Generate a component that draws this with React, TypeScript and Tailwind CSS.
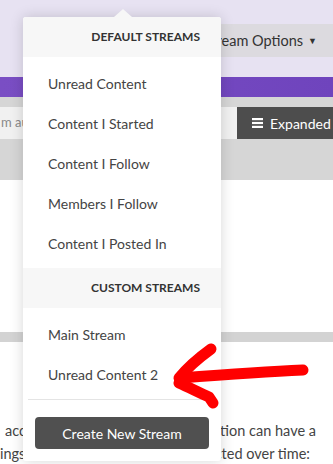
const defaultStreams = ["Unread Content", "Content I Started", "Content I Follow", "Members I Follow", "Content I Posted In"]
const customStreams = ["Main Stream", "Unread Content 2"]

export default function App() {
  return (
    <div
      className="relative w-[333px] h-[464px] overflow-hidden bg-white text-[#444]"
      style={{ fontFamily: 'Lato, "Noto Sans", sans-serif' }}
    >
      {/* page behind the menu */}
      <div className="h-[77px] bg-[#e7e2f2] flex items-start justify-end pt-[24px]">
        <div className="h-[33px] w-[140px] bg-[#dcdadf] rounded-l-[3px] flex items-center justify-end pr-[16px] gap-[5px] text-[14.5px] text-[#333] whitespace-nowrap">
          <span>Stream Options</span>
          <span className="text-[9px]">▼</span>
        </div>
      </div>
      <div className="h-[20px] bg-gradient-to-r from-[#7a4ec4] to-[#6f44bd]" />
      <div className="h-[10px] bg-[#d6d6d6]" />
      <div className="h-[32px] flex">
        <div className="flex-1 bg-[#f1f1f1] flex items-center text-[13px] text-[#888] pl-[1px]">m au</div>
        <div className="w-[96px] bg-[#4d4d4d] text-white flex items-center gap-[7px] pl-[15px] text-[14px] whitespace-nowrap">
          <svg width="11" height="10" viewBox="0 0 11 10" fill="#fff">
            <rect x="0" y="0" width="11" height="2.2" />
            <rect x="0" y="3.9" width="11" height="2.2" />
            <rect x="0" y="7.8" width="11" height="2.2" />
          </svg>
          <span>Expanded</span>
        </div>
      </div>
      <div className="h-[41px] bg-[#d6d6d6]" />
      <div className="h-[152px] bg-white" />
      <div className="h-[10px] bg-[#d3d3d3]" />
      <div className="pt-[77px] text-[14.5px] leading-[23px] text-[#444]">
        <div className="flex justify-between pr-[17px]">
          <span className="pl-[5px]">acc</span>
          <span>sition can have a</span>
        </div>
        <div className="flex justify-between pr-[23px]">
          <span>ings</span>
          <span>ected over time:</span>
        </div>
      </div>

      {/* dropdown menu */}
      <div className="absolute left-[23px] top-[17px] w-[198px] bg-white rounded-[3px] shadow-[0_0_14px_rgba(0,0,0,0.16)]">
        <div className="absolute -top-[8px] left-[91px] w-0 h-0 border-l-[9px] border-r-[9px] border-b-[8px] border-l-transparent border-r-transparent border-b-[#f7f7f7]" />
        <div className="h-[40px] bg-[#f7f7f7] flex items-center justify-end pr-[21px] text-[12px] font-bold text-[#333] rounded-t-[3px]">
          DEFAULT STREAMS
        </div>
        <div className="pt-[6px] pb-[5px]">
          {defaultStreams.map((s) => (
            <div key={s} className="h-[40px] flex items-center pl-[25px] text-[14px] text-[#444]">
              {s}
            </div>
          ))}
        </div>
        <div className="h-[40px] bg-[#f7f7f7] flex items-center justify-end pr-[21px] text-[12px] font-bold text-[#333]">
          CUSTOM STREAMS
        </div>
        <div className="pt-[6px] pb-[5px]">
          {customStreams.map((s) => (
            <div key={s} className="h-[40px] flex items-center pl-[25px] text-[14px] text-[#444]">
              {s}
            </div>
          ))}
        </div>
        <div className="mx-[5px] h-px bg-[#e4e4e4]" />
        <div className="px-[12px] pt-[17px] pb-[12px]">
          <button className="w-full h-[32px] bg-[#505050] rounded-[4px] text-white text-[14px]">
            Create New Stream
          </button>
        </div>
      </div>

      {/* red annotation arrow */}
      <svg className="absolute inset-0 pointer-events-none" width="333" height="464">
        <g fill="none" stroke="#ff0000" strokeWidth="11" strokeLinecap="round" strokeLinejoin="round">
          <path d="M303 370 C 260 372, 220 375, 180 378" />
          <path d="M211 349 C 200 357, 188 367, 179 378" />
          <path d="M179 383 C 190 388, 200 393, 209 397 L 213 403" />
        </g>
      </svg>
    </div>
  )
}
